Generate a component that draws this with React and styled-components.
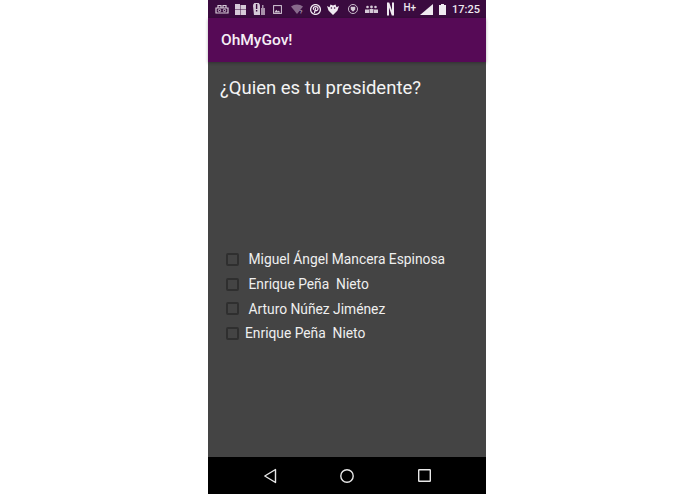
import React from "react";
import styled, { createGlobalStyle } from "styled-components";

const Global = createGlobalStyle`
  html, body {
    margin: 0;
    padding: 0;
    background: #fff;
    font-family: Roboto, "Liberation Sans", sans-serif;
  }
`;

const options = [
  { label: "Miguel Ángel Mancera Espinosa", gap: 9.5 },
  { label: "Enrique Peña  Nieto", gap: 9.5 },
  { label: "Arturo Núñez Jiménez", gap: 9.5 },
  { label: "Enrique Peña  Nieto", gap: 6 },
];

const Tint = "#d6cad8";
const Bright = "#f0eaf1";
const Bar = "#3a0b3f";

const App = () => {
  return (
    <>
      <Global />
      <Page>
        <Phone>
          <StatusBar>
            <StatusLeft>
              <Glyph width="14" height="10" viewBox="0 0 14 10">
                <path d="M1 9V4h12v5zM3 4V1.500h3V4M8 4V1.500h3V4" fill="none" stroke={Tint} strokeWidth="1.200" />
                <circle cx="4.500" cy="6.500" r="1.200" fill="none" stroke={Tint} />
                <circle cx="9.500" cy="6.500" r="1.200" fill="none" stroke={Tint} />
              </Glyph>
              <Glyph $left={6} width="11" height="11" viewBox="0 0 11 11">
                <path d="M0 0h5v5H0zM5.500 1H11v4H5.500zM0 5.500h5V11H0zM5.500 5.500H11V11H5.500z" fill={Tint} />
              </Glyph>
              <Glyph $left={7} width="12" height="12" viewBox="0 0 12 12">
                <path d="M0 3a3.500 3.500 0 0 1 7 0v9H1z" fill={Tint} />
                <path d="M2.900 1h1.400v5H2.900zM2.900 7h1.400v1.400H2.900z" fill={Bar} />
                <path d="M8 5h4v7H8zM9 2h1.500v3H9z" fill={Tint} opacity=".7" />
              </Glyph>
              <Glyph $left={8} width="9" height="9" viewBox="0 0 9 9">
                <rect x=".6" y=".6" width="7.800" height="7.800" fill="none" stroke={Tint} />
                <path d="M1.300 7.500l2-2.800 1.500 1.800 1-1 1.500 2z" fill={Tint} />
              </Glyph>
              <Glyph $left={9} width="13" height="10" viewBox="0 0 13 10">
                <path d="M0 2.500a10 10 0 0 1 12 0L6 10z" fill={Tint} opacity=".5" />
                <text x="8.500" y="10" fontSize="6" fill={Tint} fontFamily="Roboto, sans-serif">?</text>
              </Glyph>
              <Glyph $left={6} width="11" height="11" viewBox="0 0 11 11">
                <circle cx="5.500" cy="5.500" r="4.900" fill="none" stroke={Bright} strokeWidth="1.300" />
                <path d="M4.400 9l1.200-5M3.600 5.800c-.9-2 .5-3.200 2.100-3.200 1.700 0 2.600 1.200 2.200 2.700-.4 1.400-2 1.800-2.700.8" fill="none" stroke={Bright} strokeWidth="1.200" />
              </Glyph>
              <Glyph $left={6} width="12" height="11" viewBox="0 0 12 11">
                <path d="M0 2l2.500 1.200L3.500.5 6 1.500 8.500.5l1 2.700L12 2l-1.500 4.500L6 11 1.500 6.500z" fill={Bright} />
                <circle cx="4.400" cy="4" r=".8" fill={Bar} />
                <circle cx="7.600" cy="4" r=".8" fill={Bar} />
              </Glyph>
              <Glyph $left={9} width="10" height="10" viewBox="0 0 11 11">
                <circle cx="5.500" cy="5.500" r="5" fill="none" stroke={Tint} />
                <path d="M3 3h5v3L5.500 8.500 3 6z" fill={Tint} />
              </Glyph>
              <Glyph $left={7} width="13" height="8" viewBox="0 0 13 8">
                <circle cx="2.500" cy="2" r="1.300" fill={Tint} />
                <circle cx="6.500" cy="2" r="1.400" fill={Tint} />
                <circle cx="10.500" cy="2" r="1.300" fill={Tint} />
                <path d="M0 8V4.500h4V8zM4.500 8V4h4v4zM9 8V4.500h4V8z" fill={Tint} />
              </Glyph>
              <Glyph $left={9} width="7" height="14" viewBox="0 0 7 13">
                <path d="M0 0h2.200L5 8V0h2v13H4.800L2 5v8H0z" fill={Bright} />
              </Glyph>
            </StatusLeft>
            <StatusRight>
              <Network>H+</Network>
              <Glyph width="13" height="11" viewBox="0 0 13 11">
                <path d="M0 11L13 0v11z" fill={Bright} />
              </Glyph>
              <Glyph $left={6} width="7" height="11" viewBox="0 0 7 11">
                <path d="M2 0h3v1h2v10H0V1h2z" fill={Bright} />
              </Glyph>
              <Clock>17:25</Clock>
            </StatusRight>
          </StatusBar>
          <AppBar>OhMyGov!</AppBar>
          <Content>
            <Question>¿Quien es tu presidente?</Question>
            <OptionList>
              {options.map((option, index) => (
                <Option key={index} $gap={option.gap}>
                  <Box />
                  {option.label}
                </Option>
              ))}
            </OptionList>
          </Content>
          <NavBar>
            <svg width="13" height="16" viewBox="0 0 13 16">
              <path d="M11.500 1.500v13L.8 8z" fill="none" stroke="#e8e8e8" strokeWidth="1.400" strokeLinejoin="round" />
            </svg>
            <svg width="14" height="14" viewBox="0 0 14 14">
              <circle cx="7" cy="7" r="6.200" fill="none" stroke="#e8e8e8" strokeWidth="1.400" />
            </svg>
            <svg width="13" height="13" viewBox="0 0 13 13">
              <rect x=".7" y=".7" width="11.600" height="11.600" rx=".5" fill="none" stroke="#e8e8e8" strokeWidth="1.400" />
            </svg>
          </NavBar>
        </Phone>
      </Page>
    </>
  );
};

export default App;

const Page = styled.div`
  width: 695px;
  height: 494px;
  display: flex;
  padding-left: 208px;
  box-sizing: border-box;
  overflow: hidden;
`;

const Phone = styled.div`
  width: 278px;
  height: 494px;
  display: flex;
  flex-direction: column;
  background: #444444;
`;

const StatusBar = styled.div`
  height: 18px;
  flex: none;
  display: flex;
  align-items: center;
  justify-content: space-between;
  padding: 0 6px 0 7px;
  background: #3a0b3f;
`;

const StatusLeft = styled.div`
  display: flex;
  align-items: center;
`;

const StatusRight = styled.div`
  display: flex;
  align-items: center;
`;

const Glyph = styled.svg`
  display: block;
  flex: none;
  margin-left: ${(p) => p.$left || 0}px;
`;

const Network = styled.span`
  font-size: 10px;
  font-weight: 500;
  color: #eee8ef;
  margin: -4px 4px 0 0;
`;

const Clock = styled.span`
  font-size: 11px;
  font-weight: 500;
  color: #eee8ef;
  margin-left: 6px;
`;

const AppBar = styled.div`
  height: 44px;
  flex: none;
  display: flex;
  align-items: center;
  padding-left: 13px;
  box-sizing: border-box;
  background: #560a56;
  color: #f5eef5;
  font-size: 15.5px;
  font-weight: 500;
  box-shadow: 0 1px 3px rgba(0, 0, 0, 0.3);
  z-index: 1;
`;

const Content = styled.div`
  flex: 1;
  display: flex;
  flex-direction: column;
  padding: 14px 0 0 12px;
`;

const Question = styled.div`
  font-size: 18.5px;
  line-height: 25px;
  color: #f4f4f4;
`;

const OptionList = styled.div`
  display: flex;
  flex-direction: column;
  margin-top: 146px;
  padding-left: 6px;
`;

const Option = styled.div`
  height: 24.7px;
  display: flex;
  align-items: center;
  gap: ${(p) => p.$gap}px;
  color: #efefef;
  font-size: 13.8px;
  white-space: pre;
`;

const Box = styled.span`
  width: 13px;
  height: 13px;
  flex: none;
  box-sizing: border-box;
  border: 2px solid #2f2f2f;
  border-radius: 2px;
`;

const NavBar = styled.div`
  height: 37px;
  flex: none;
  display: flex;
  align-items: center;
  justify-content: center;
  gap: 63.5px;
  background: #000;
`;
